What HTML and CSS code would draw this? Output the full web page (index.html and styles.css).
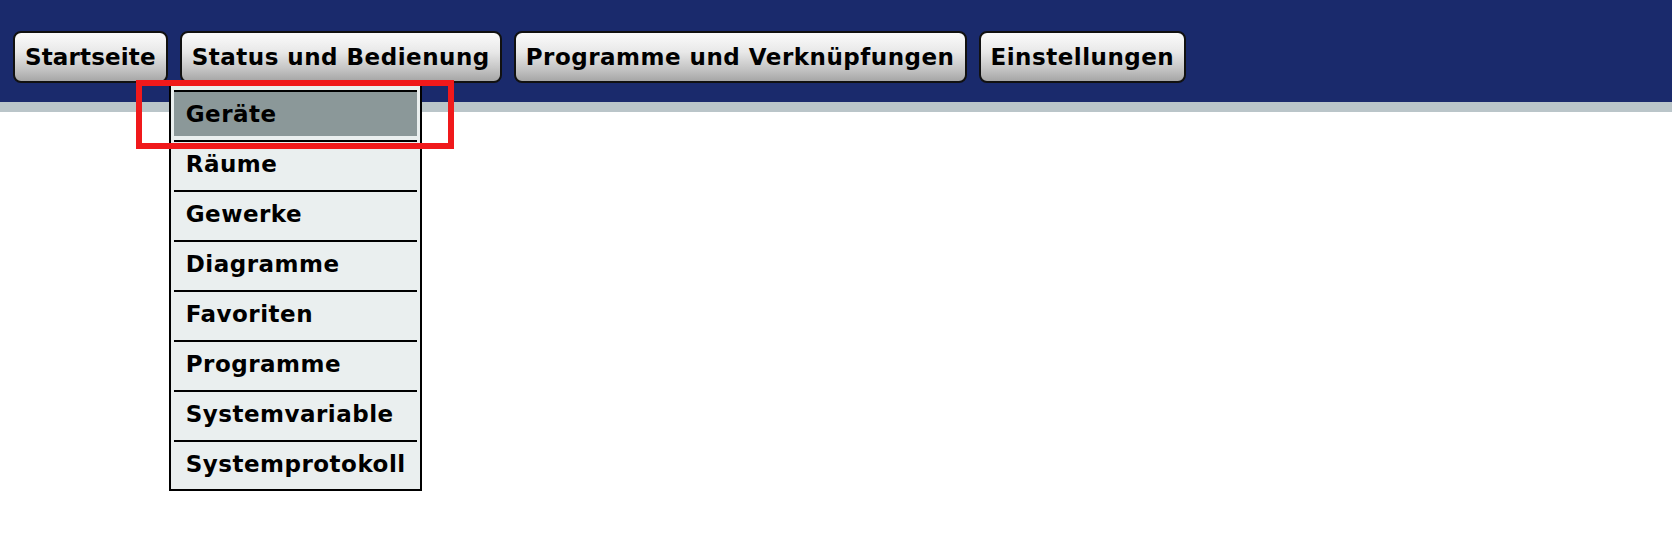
FILE: index.html
```html
<!DOCTYPE html>
<html lang="de">
<head>
<meta charset="utf-8">
<title>Status und Bedienung</title>
<link rel="stylesheet" href="styles.css">
</head>
<body>
<div class="page">
  <header class="topbar">
    <nav class="mainnav">
      <div class="navitem"><button class="navbtn navbtn-tight">Startseite</button></div>
      <div class="navitem">
        <button class="navbtn">Status und Bedienung</button>
        <ul class="dropdown">
          <li class="active"><a>Geräte</a></li>
          <li><a>Räume</a></li>
          <li><a>Gewerke</a></li>
          <li><a>Diagramme</a></li>
          <li><a>Favoriten</a></li>
          <li><a>Programme</a></li>
          <li><a>Systemvariable</a></li>
          <li><a>Systemprotokoll</a></li>
        </ul>
      </div>
      <div class="navitem"><button class="navbtn">Programme und Verknüpfungen</button></div>
      <div class="navitem"><button class="navbtn">Einstellungen</button></div>
    </nav>
  </header>
  <div class="stripe"></div>
  <div class="highlight-box"></div>
</div>
</body>
</html>
```
FILE: styles.css
```css
html, body {
  margin: 0;
  padding: 0;
  background: #ffffff;
}

.page {
  position: relative;
  width: 100%;
  min-height: 558px;
  font-family: "DejaVu Sans", Verdana, sans-serif;
  font-weight: bold;
  font-size: 23px;
  letter-spacing: 0.5px;
  color: #000;
}

.topbar {
  background: #1a2a6c;
  height: 102px;
  box-sizing: border-box;
  padding: 31px 0 0 13px;
}

.mainnav {
  display: flex;
  gap: 12px;
  align-items: flex-start;
}

.navitem {
  position: relative;
}

.navbtn {
  display: block;
  height: 52px;
  box-sizing: border-box;
  margin: 0;
  padding: 0 10px 0 10px;
  border: 2px solid #111;
  border-radius: 8px;
  background: linear-gradient(to bottom, #fbfbfb 0%, #e8e8e8 40%, #c4c4c4 75%, #a6a6a6 100%);
  font-family: inherit;
  font-weight: bold;
  font-size: 23px;
  letter-spacing: 0.5px;
  line-height: 48px;
  color: #000;
  white-space: nowrap;
}

.navbtn-tight {
  letter-spacing: 0.15px;
}

.stripe {
  height: 10px;
  background: #bac5c9;
}

.dropdown {
  position: absolute;
  left: -11px;
  top: 53px;
  width: 253px;
  box-sizing: border-box;
  margin: 0;
  padding: 6px 3px 0;
  list-style: none;
  background: #eaefef;
  border: 2px solid #000;
  border-top: none;
  z-index: 2;
}

.dropdown li {
  border-top: 2px solid #000;
  padding-bottom: 4px;
}

.dropdown li:last-child {
  padding-bottom: 3px;
}

.dropdown a {
  display: block;
  height: 44px;
  line-height: 44px;
  padding-left: 12px;
  white-space: nowrap;
  color: #000;
}

.dropdown li.active a {
  background: #8b9899;
}

.highlight-box {
  position: absolute;
  left: 136px;
  top: 80px;
  width: 318px;
  height: 69px;
  box-sizing: border-box;
  border: 6px solid #f0191b;
  z-index: 3;
}
```
